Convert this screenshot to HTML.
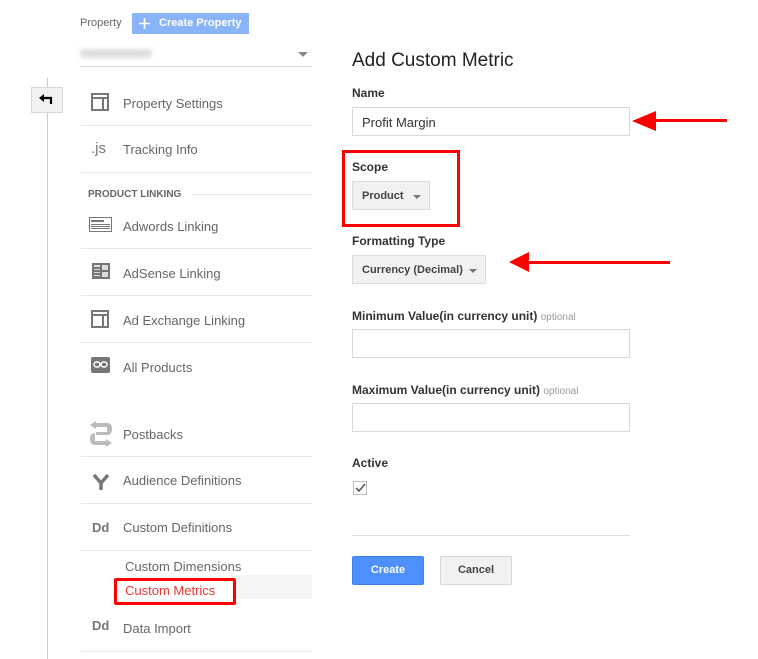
<!DOCTYPE html>
<html><head><meta charset="utf-8"><style>
*{margin:0;padding:0;box-sizing:border-box}
body{width:758px;height:659px;background:#fff;font-family:"Liberation Sans",Arial,sans-serif;position:relative;overflow:hidden;color:#333}
.a{position:absolute}
.sep{position:absolute;left:81px;width:231px;height:1px;background:#e8e8e8}
.it{position:absolute;left:123px;font-size:13px;color:#666;line-height:16px}
.ic{position:absolute;left:91px}
.lbl{position:absolute;left:352px;font-size:12px;font-weight:bold;color:#333}
.inp{position:absolute;left:352px;width:278px;height:29px;border:1px solid #d9d9d9;background:#fff}
.dd{position:absolute;left:352px;height:29px;border:1px solid #dcdcdc;background:#f1f1f1;font-size:11px;font-weight:bold;color:#444;padding:8px 0 0 9px}
.car{position:absolute;width:0;height:0;border-left:4px solid transparent;border-right:4px solid transparent;border-top:4px solid #777}
.opt{font-weight:normal;color:#999;font-size:10px}
</style></head><body>
<div class="a" style="left:80px;top:17px;font-size:11px;color:#666">Property</div>
<div class="a" style="left:132px;top:13px;width:117px;height:21px;background:#8ab4f8;color:#fff;font-size:11px;font-weight:bold;line-height:21px;padding-left:27px">Create Property</div>
<svg class="a" style="left:138px;top:17px" width="13" height="13"><path d="M6.5 1v11M1 6.5h11" stroke="#fff" stroke-width="1.6"/></svg>
<div class="a" style="left:80px;top:49px;width:72px;height:9px;background:#ddd;border-radius:4px;filter:blur(2px)"></div>
<div class="car" style="left:298px;top:52px;border-top-color:#888;border-width:5px 5px 0 5px"></div>
<div class="a" style="left:80px;top:66px;width:232px;height:1px;background:#ddd"></div>

<div class="a" style="left:47px;top:78px;width:1px;height:581px;background:#ccc"></div>
<div class="a" style="left:31px;top:87px;width:32px;height:26px;background:#f1f1f1;border:1px solid #d8d8d8"></div>
<svg class="a" style="left:38px;top:93px" width="16" height="12"><path d="M1 5l5-4v8z" fill="#000"/><path d="M5 5h8v6" stroke="#000" stroke-width="2.2" fill="none"/></svg>

<svg class="ic" style="top:93px" width="18" height="18"><rect x="1" y="1" width="16" height="16" fill="none" stroke="#777" stroke-width="2"/><line x1="1" y1="5" x2="17" y2="5" stroke="#777" stroke-width="2"/><line x1="12" y1="5" x2="12" y2="17" stroke="#777" stroke-width="2"/></svg>
<div class="it" style="top:96px">Property Settings</div>
<div class="sep" style="top:125px"></div>
<div class="a" style="left:91px;top:140px;font-size:15px;color:#777">.js</div>
<div class="it" style="top:142px">Tracking Info</div>
<div class="sep" style="top:172px"></div>
<div class="a" style="left:88px;top:189px;font-size:10px;font-weight:bold;color:#666">PRODUCT LINKING</div>
<div class="a" style="left:192px;top:194px;width:120px;height:1px;background:#e8e8e8"></div>
<svg class="ic" style="top:217px;left:89px" width="24" height="16"><rect x="0.5" y="0.5" width="22" height="14" fill="none" stroke="#777"/><rect x="2" y="3" width="13" height="2" fill="#777"/><rect x="2" y="7" width="19" height="1" fill="#777"/><rect x="2" y="9" width="19" height="1" fill="#777"/><rect x="2" y="11" width="19" height="1" fill="#777"/></svg>
<div class="it" style="top:219px">Adwords Linking</div>
<div class="sep" style="top:248px"></div>
<svg class="ic" style="top:263px;left:92px" width="18" height="16"><rect width="18" height="16" fill="#777"/><rect x="2" y="2" width="6" height="2" fill="#ddd"/><rect x="2" y="6" width="6" height="1" fill="#ddd"/><rect x="2" y="9" width="6" height="1" fill="#ddd"/><rect x="2" y="12" width="6" height="1" fill="#ddd"/><rect x="10" y="2" width="6" height="5" fill="#ddd"/><rect x="10" y="9" width="6" height="5" fill="#ddd"/></svg>
<div class="it" style="top:266px">AdSense Linking</div>
<div class="sep" style="top:295px"></div>
<svg class="ic" style="top:310px" width="18" height="18"><rect x="1" y="1" width="16" height="16" fill="none" stroke="#777" stroke-width="2"/><line x1="1" y1="5" x2="17" y2="5" stroke="#777" stroke-width="2"/><line x1="12" y1="5" x2="12" y2="17" stroke="#777" stroke-width="2"/></svg>
<div class="it" style="top:313px">Ad Exchange Linking</div>
<div class="sep" style="top:342px"></div>
<svg class="ic" style="top:357px" width="19" height="16"><rect width="19" height="16" rx="2" fill="#777"/><rect x="3" y="5" width="6" height="5" rx="2.5" fill="none" stroke="#fff" stroke-width="1.5"/><rect x="10" y="5" width="6" height="5" rx="2.5" fill="none" stroke="#fff" stroke-width="1.5"/></svg>
<div class="it" style="top:360px">All Products</div>
<svg class="ic" style="top:421px;left:88px" width="26" height="26"><path d="M2 4l6-4v8z" fill="#bbb"/><rect x="6" y="2" width="13" height="4" fill="#bbb"/><path d="M19 2q5 0 5 6t-5 6" fill="#bbb"/><path d="M24 22l-6 4v-8z" fill="#bbb"/><rect x="7" y="20" width="13" height="4" fill="#bbb"/><path d="M7 12q-5 0-5 6t5 6" fill="#bbb"/><rect x="8" y="11" width="13" height="3" fill="#bbb"/></svg>
<div class="it" style="top:427px">Postbacks</div>
<div class="sep" style="top:456px"></div>
<svg class="ic" style="top:472px;left:92px" width="18" height="18"><path d="M2 3l7 8v7M9 11l7-8" stroke="#777" stroke-width="3.5" fill="none"/></svg>
<div class="it" style="top:473px">Audience Definitions</div>
<div class="sep" style="top:503px"></div>
<div class="a" style="left:92px;top:520px;font-size:13px;font-weight:bold;color:#777">Dd</div>
<div class="it" style="top:520px">Custom Definitions</div>
<div class="sep" style="top:550px"></div>
<div class="it" style="top:559px;left:125px">Custom Dimensions</div>
<div class="a" style="left:232px;top:575px;width:80px;height:24px;background:#f5f5f5"></div>
<div class="it" style="top:583px;left:125px;color:#e53935">Custom Metrics</div>
<div class="a" style="left:114px;top:578px;width:122px;height:27px;border:3px solid #f00;border-radius:2px"></div>
<div class="a" style="left:92px;top:618px;font-size:13px;font-weight:bold;color:#777">Dd</div>
<div class="it" style="top:621px">Data Import</div>
<div class="sep" style="top:651px"></div>

<div class="a" style="left:352px;top:50px;font-size:19px;color:#222">Add Custom Metric</div>
<div class="lbl" style="top:86px">Name</div>
<div class="inp" style="top:107px;font-size:13px;color:#333;padding:7px 0 0 9px">Profit Margin</div>
<div class="a" style="left:648px;top:119px;width:79px;height:3px;background:#f00"></div>
<svg class="a" style="left:632px;top:111px" width="24" height="20"><polygon points="0,10 24,0 24,20" fill="#f00"/></svg>

<div class="a" style="left:342px;top:150px;width:118px;height:77px;border:3px solid #f00"></div>
<div class="lbl" style="top:160px">Scope</div>
<div class="dd" style="top:181px;width:78px">Product</div>
<div class="car" style="left:413px;top:195px"></div>
<div class="lbl" style="top:234px">Formatting Type</div>
<div class="dd" style="top:255px;width:134px">Currency (Decimal)</div>
<div class="car" style="left:469px;top:269px"></div>
<div class="a" style="left:526px;top:261px;width:144px;height:3px;background:#f00"></div>
<svg class="a" style="left:509px;top:252px" width="20" height="20"><polygon points="0,10 20,0 20,20" fill="#f00"/></svg>

<div class="lbl" style="top:309px">Minimum Value(in currency unit) <span class="opt">optional</span></div>
<div class="inp" style="top:329px"></div>
<div class="lbl" style="top:383px">Maximum Value(in currency unit) <span class="opt">optional</span></div>
<div class="inp" style="top:403px"></div>
<div class="lbl" style="top:456px">Active</div>
<svg class="a" style="left:353px;top:481px" width="14" height="14"><rect x="0.5" y="0.5" width="13" height="13" fill="#fff" stroke="#bbb"/><path d="M3 7l3 3 6-7" stroke="#555" stroke-width="1.5" fill="none"/></svg>
<div class="a" style="left:352px;top:535px;width:278px;height:1px;background:#e0e0e0"></div>
<div class="a" style="left:352px;top:556px;width:72px;height:29px;background:#4d90fe;border:1px solid #3b7fe8;border-radius:2px;color:#fff;font-size:11px;font-weight:bold;text-align:center;line-height:27px">Create</div>
<div class="a" style="left:440px;top:556px;width:72px;height:29px;background:#f1f1f1;border:1px solid #d6d6d6;border-radius:2px;color:#444;font-size:11px;font-weight:bold;text-align:center;line-height:27px">Cancel</div>
</body></html>
